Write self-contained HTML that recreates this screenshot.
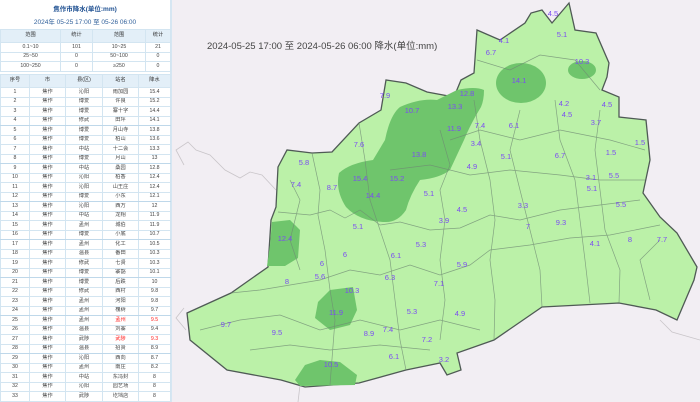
<!DOCTYPE html>
<html><head><meta charset="utf-8"><style>
*{margin:0;padding:0;box-sizing:border-box}
body{width:700px;height:402px;overflow:hidden;background:#f2eef3;font-family:"Liberation Sans","Noto Sans CJK SC",sans-serif;position:relative}
#map{position:absolute;left:0;top:0}
#panel{position:absolute;left:0;top:0;width:172px;height:402px;background:#fff;border-right:2px solid #d6e6f2}
.t1{position:absolute;left:0;width:170px;top:3px;text-align:center;font-size:6.5px;font-weight:bold;color:#1d4f91}
.t2{position:absolute;left:0;width:170px;top:16px;text-align:center;font-size:6.5px;color:#2f5f9a}
table{position:absolute;left:0;width:170px;border-collapse:collapse;table-layout:fixed;font-size:5.2px;color:#444;text-align:center}
td,th{border:1px solid #d3e5f1;overflow:hidden;white-space:nowrap;line-height:1}
th{background:#e3eff8;font-weight:normal;color:#333}
#st{top:29px}
#st th{height:13px}#st td{height:9.5px}
#mt{top:74px}
#mt th{height:13px}#mt td{height:9.5px}
.r td.n,.r td.v{color:#f22}
.g td{border-bottom:1.5px solid #bfd8ea}
</style></head><body>
<svg id="map" width="700" height="402" viewBox="0 0 700 402" font-family="Liberation Sans, Noto Sans CJK SC, sans-serif">
<g fill="none" stroke="#c9c5c9" stroke-width="0.8">
<path d="M184 165 L176 150 L188 142 L196 150 L210 155 L225 170 L240 178 L250 172 L262 175 L276 190"/>
<path d="M186 330 L176 318 L184 308"/>
<path d="M300 385 L298 402"/><path d="M660 320 L672 332 L700 340"/>
</g>
<path fill="#bbf1a8" stroke="#4f5a55" stroke-width="1.3" d="M187 313 L231 293 L268 267 L271 220 L276 207 L278 167 L287 150 L312 153 L332 152 L359 123 L381 110 L386 80 L406 83 L427 92 L454 97 L461 80 L474 73 L477 30 L500 40 L525 23 L531 13 L542 10 L552 23 L569 3 L575 30 L596 33 L609 63 L607 77 L602 90 L619 97 L619 117 L646 120 L650 160 L643 193 L660 217 L677 233 L697 267 L694 280 L677 320 L656 310 L619 303 L542 307 L494 340 L457 353 L461 370 L447 375 L440 363 L406 370 L359 383 L305 387 L281 380 L227 370 L190 340 Z"/>
<g fill="#6fc56c">
<path d="M385 140 Q390 115 400 107 Q420 98 437 100 L457 90 Q475 86 484 90 Q484 100 481 107 Q470 125 464 140 L450 170 Q440 178 420 180 Q410 195 406 210 Q398 222 386 222 Q360 222 346 207 Q335 190 339 173 Q350 163 373 160 Z"/>
<ellipse cx="521" cy="83" rx="25" ry="20"/>
<ellipse cx="582" cy="70" rx="14" ry="9"/>
<path d="M272 222 L290 220 L300 230 L298 258 L285 266 L267 266 L270 245 Z"/>
<path d="M330 290 L353 287 L357 310 L350 325 L330 330 L315 318 L318 302 Z"/>
<path d="M305 365 L320 360 L340 362 L357 375 L355 385 L300 386 L295 380 Z"/>
</g>
<g fill="none" stroke="#6f8a73" stroke-width="0.7" opacity="0.75">
<path d="M278 212 L310 215 L330 210 L345 218 L360 210 L380 225 L400 222 L430 230 L460 228 L490 215 L520 220 L560 210 L600 205 L640 200"/>
<path d="M231 293 L260 290 L290 285 L320 280 L350 270 L380 275 L410 265 L440 275 L470 265 L490 250 L530 245 L570 238 L610 235 L660 225"/>
<path d="M312 153 L320 190 L318 215 L325 250 L330 290 L335 320 L330 385"/>
<path d="M359 123 L365 160 L370 200 L380 230 L390 260 L395 300 L400 340 L406 370"/>
<path d="M440 130 L450 165 L440 190 L445 220 L440 260 L445 300 L440 340"/>
<path d="M474 100 L480 140 L490 180 L495 220 L490 260 L495 300 L494 340"/>
<path d="M520 110 L510 150 L520 190 L530 230 L540 270 L542 307"/>
<path d="M555 100 L560 140 L575 180 L580 220 L585 260 L590 303"/>
<path d="M600 110 L595 150 L600 190 L605 230 L620 270 L619 303"/>
<path d="M477 60 L510 70 L540 55 L575 60 L600 90"/>
<path d="M450 140 L480 130 L520 140 L560 130 L610 140 L645 150"/>
<path d="M390 170 L430 165 L470 175 L510 170 L560 175 L600 180 L645 180"/>
<path d="M200 330 L240 320 L280 315 L320 330 L360 320 L400 330 L440 320 L480 330"/>
<path d="M250 350 L290 345 L330 350 L380 345 L430 350"/>
<path d="M290 180 L300 200 L290 240 L300 270"/>
<path d="M660 240 L640 260 L650 300"/>
</g>
<text x="207" y="49" font-size="9.5" fill="#444">2024-05-25 17:00 至 2024-05-26 06:00 降水(单位:mm)</text>
<g font-size="7.5" fill="#7b4cf2" text-anchor="middle">
<text x="553" y="16">4.5</text><text x="562" y="37">5.1</text><text x="504" y="43">4.1</text><text x="491" y="55">6.7</text>
<text x="582" y="64">10.3</text><text x="519" y="83">14.1</text><text x="467" y="96">12.8</text><text x="385" y="98">7.9</text>
<text x="455" y="109">13.3</text><text x="412" y="113">10.7</text><text x="564" y="106">4.2</text><text x="607" y="107">4.5</text>
<text x="567" y="117">4.5</text><text x="596" y="125">3.7</text><text x="454" y="131">11.9</text><text x="480" y="128">7.4</text>
<text x="514" y="128">6.1</text><text x="640" y="145">1.5</text><text x="476" y="146">3.4</text><text x="359" y="147">7.6</text>
<text x="419" y="157">13.8</text><text x="506" y="159">5.1</text><text x="560" y="158">6.7</text><text x="611" y="155">1.5</text>
<text x="304" y="165">5.8</text><text x="472" y="169">4.9</text><text x="360" y="181">15.4</text><text x="397" y="181">15.2</text>
<text x="591" y="180">3.1</text><text x="614" y="178">5.5</text><text x="296" y="187">7.4</text><text x="332" y="190">8.7</text>
<text x="373" y="198">14.4</text><text x="429" y="196">5.1</text><text x="592" y="191">5.1</text><text x="523" y="208">3.3</text>
<text x="621" y="207">5.5</text><text x="462" y="212">4.5</text><text x="444" y="223">3.9</text><text x="561" y="225">9.3</text>
<text x="528" y="229">7</text><text x="358" y="229">5.1</text><text x="285" y="241">12.4</text><text x="421" y="247">5.3</text>
<text x="595" y="246">4.1</text><text x="630" y="242">8</text><text x="662" y="242">7.7</text><text x="345" y="257">6</text>
<text x="396" y="258">6.1</text><text x="322" y="266">6</text><text x="462" y="267">5.9</text><text x="320" y="279">5.6</text>
<text x="287" y="284">8</text><text x="390" y="280">6.3</text><text x="439" y="286">7.1</text><text x="352" y="293">10.3</text>
<text x="336" y="315">11.9</text><text x="412" y="314">5.3</text><text x="460" y="316">4.9</text><text x="226" y="327">9.7</text>
<text x="277" y="335">9.5</text><text x="369" y="336">8.9</text><text x="388" y="332">7.4</text><text x="427" y="342">7.2</text>
<text x="394" y="359">6.1</text><text x="444" y="362">3.2</text><text x="331" y="367">10.5</text>
</g>
</svg>
<div id="panel">
<div class="t1">焦作市降水(单位:mm)</div>
<div class="t2">2024年 05-25 17:00 至 05-26 06:00</div>
<table id="st"><colgroup><col style="width:60px"><col style="width:32px"><col style="width:53px"><col style="width:25px"></colgroup>
<tr><th>范围</th><th>统计</th><th>范围</th><th>统计</th></tr>
<tr><td>0.1~10</td><td>101</td><td>10~25</td><td>21</td></tr>
<tr><td>25~50</td><td>0</td><td>50~100</td><td>0</td></tr>
<tr><td>100~250</td><td>0</td><td>≥250</td><td>0</td></tr>
</table>
<table id="mt"><colgroup><col style="width:29px"><col style="width:36px"><col style="width:37px"><col style="width:36px"><col style="width:32px"></colgroup>
<tr><th>序号</th><th>市</th><th>县(区)</th><th>站名</th><th>降水</th></tr>
<tr><td>1</td><td>焦作</td><td>沁阳</td><td class="n">雨加园</td><td class="v">15.4</td></tr>
<tr><td>2</td><td>焦作</td><td>博爱</td><td class="n">许良</td><td class="v">15.2</td></tr>
<tr><td>3</td><td>焦作</td><td>博爱</td><td class="n">寨十字</td><td class="v">14.4</td></tr>
<tr class="g"><td>4</td><td>焦作</td><td>修武</td><td class="n">田坪</td><td class="v">14.1</td></tr>
<tr><td>5</td><td>焦作</td><td>博爱</td><td class="n">月山寺</td><td class="v">13.8</td></tr>
<tr><td>6</td><td>焦作</td><td>博爱</td><td class="n">柏山</td><td class="v">13.6</td></tr>
<tr><td>7</td><td>焦作</td><td>中站</td><td class="n">十二会</td><td class="v">13.3</td></tr>
<tr class="g"><td>8</td><td>焦作</td><td>博爱</td><td class="n">月山</td><td class="v">13</td></tr>
<tr><td>9</td><td>焦作</td><td>中站</td><td class="n">桑园</td><td class="v">12.8</td></tr>
<tr><td>10</td><td>焦作</td><td>沁阳</td><td class="n">柏香</td><td class="v">12.4</td></tr>
<tr><td>11</td><td>焦作</td><td>沁阳</td><td class="n">山王庄</td><td class="v">12.4</td></tr>
<tr class="g"><td>12</td><td>焦作</td><td>博爱</td><td class="n">小东</td><td class="v">12.1</td></tr>
<tr><td>13</td><td>焦作</td><td>沁阳</td><td class="n">西万</td><td class="v">12</td></tr>
<tr><td>14</td><td>焦作</td><td>中站</td><td class="n">龙翔</td><td class="v">11.9</td></tr>
<tr><td>15</td><td>焦作</td><td>孟州</td><td class="n">城伯</td><td class="v">11.9</td></tr>
<tr class="g"><td>16</td><td>焦作</td><td>博爱</td><td class="n">小底</td><td class="v">10.7</td></tr>
<tr><td>17</td><td>焦作</td><td>孟州</td><td class="n">化工</td><td class="v">10.5</td></tr>
<tr><td>18</td><td>焦作</td><td>温县</td><td class="n">番田</td><td class="v">10.3</td></tr>
<tr><td>19</td><td>焦作</td><td>修武</td><td class="n">七贤</td><td class="v">10.3</td></tr>
<tr class="g"><td>20</td><td>焦作</td><td>博爱</td><td class="n">寨豁</td><td class="v">10.1</td></tr>
<tr><td>21</td><td>焦作</td><td>博爱</td><td class="n">后跌</td><td class="v">10</td></tr>
<tr><td>22</td><td>焦作</td><td>修武</td><td class="n">西村</td><td class="v">9.8</td></tr>
<tr><td>23</td><td>焦作</td><td>孟州</td><td class="n">河阳</td><td class="v">9.8</td></tr>
<tr class="g"><td>24</td><td>焦作</td><td>孟州</td><td class="n">槐树</td><td class="v">9.7</td></tr>
<tr class="r"><td>25</td><td>焦作</td><td>孟州</td><td class="n">孟州</td><td class="v">9.5</td></tr>
<tr><td>26</td><td>焦作</td><td>温县</td><td class="n">刘寨</td><td class="v">9.4</td></tr>
<tr class="r"><td>27</td><td>焦作</td><td>武陟</td><td class="n">武陟</td><td class="v">9.3</td></tr>
<tr class="g"><td>28</td><td>焦作</td><td>温县</td><td class="n">招贤</td><td class="v">8.9</td></tr>
<tr><td>29</td><td>焦作</td><td>沁阳</td><td class="n">西向</td><td class="v">8.7</td></tr>
<tr><td>30</td><td>焦作</td><td>孟州</td><td class="n">南庄</td><td class="v">8.2</td></tr>
<tr><td>31</td><td>焦作</td><td>中站</td><td class="n">东冯封</td><td class="v">8</td></tr>
<tr><td>32</td><td>焦作</td><td>沁阳</td><td class="n">园艺场</td><td class="v">8</td></tr>
<tr><td>33</td><td>焦作</td><td>武陟</td><td class="n">圪垱店</td><td class="v">8</td></tr>
</table>
</div>
</body></html>
